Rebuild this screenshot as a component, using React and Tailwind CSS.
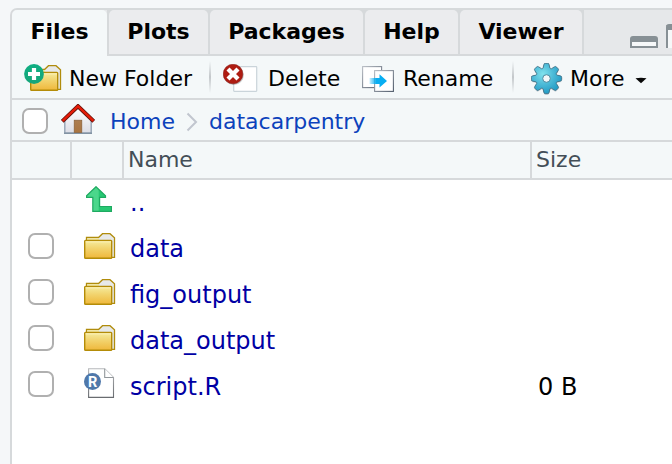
import React from "react";

const Check = ({ className = "" }) => (
  <span className={"block h-[26px] w-[26px] shrink-0 rounded-[7px] border-2 border-[#b0b0b0] bg-white " + className} />
);

const FolderShape = () => (
  <g>
    <path d="M2.5 8V4.5H14.5L18.5.7H26L30.5 4.8V24.3H27.5" fill="#e7e9e9" stroke="#b08c0c" strokeWidth="1.3" />
    <path d="M3.2 7V5.2H15V7Z" fill="#f4eaa4" />
    <rect x=".7" y="7.5" width="27" height="17.8" rx=".8" fill="url(#folder)" stroke="#b48c08" strokeWidth="1.4" />
    <path d="M1.6 8.8H27" stroke="#fff6bd" strokeWidth="1" />
  </g>
);

const Folder = () => (
  <svg width="32" height="27" viewBox="0 0 32 27" className="shrink-0"><FolderShape /></svg>
);

const NewFolder = () => (
  <svg width="38" height="30" viewBox="0 0 38 30" className="shrink-0">
    <g transform="translate(6 1)"><FolderShape /></g>
    <circle cx="10" cy="10" r="9.9" fill="url(#plus)" />
    <path d="M10 4v12M4 10h12" stroke="#fff" strokeWidth="4.2" />
  </svg>
);

const Delete = () => (
  <svg width="36" height="30" viewBox="0 0 36 30" className="shrink-0">
    <rect x="10.7" y="2.7" width="23" height="24.6" rx=".5" fill="#fff" stroke="#cad4da" strokeWidth="1.2" />
    <circle cx="10.8" cy="11" r="10" fill="#555" opacity=".35" />
    <circle cx="10" cy="10" r="9.8" fill="#ae1c12" stroke="#8f1d18" strokeWidth=".6" />
    <path d="M5 5L15 15M15 5L5 15" stroke="#fff" strokeWidth="4.3" />
  </svg>
);

const Rename = () => (
  <svg width="33" height="27" viewBox="0 0 33 27" className="shrink-0">
    <rect x=".6" y=".6" width="19" height="21" fill="#fff" stroke="url(#sheet)" strokeWidth="1.1" />
    <rect x="12.6" y="4.6" width="18.8" height="20.8" fill="#fff" stroke="url(#sheet)" strokeWidth="1.1" />
    <path d="M7.5 12H17.5V8.2L25 15L17.5 21.5V18H7.5Z" fill="url(#arrow)" />
  </svg>
);

const gearPath = Array.from({ length: 8 }, (_, i) => {
  const p = (r, d) => {
    const a = ((i * 45 + d - 90) * Math.PI) / 180;
    return (15.5 + r * Math.cos(a)).toFixed(2) + " " + (15.5 + r * Math.sin(a)).toFixed(2);
  };
  return (i ? "L" : "M") + p(11, -18) + "L" + p(14, -11) + "Q" + p(15.6, -9) + " " + p(15.2, -3) + "L" + p(15.2, 3) + "Q" + p(15.6, 9) + " " + p(14, 11) + "L" + p(11, 18) + "Q" + p(10.4, 22.5) + " " + p(11, 27);
}).join("") + "Z";

const Gear = () => (
  <svg width="32" height="34" viewBox="0 0 32 34" className="shrink-0">
    <path d={gearPath} transform="translate(0 1.2)" fill="#9aa4a8" opacity=".35" />
    <path d={gearPath} fill="url(#gear)" stroke="#426f85" strokeWidth=".9" />
    <circle cx="15.5" cy="15.5" r="3.8" fill="#f2f7f9" stroke="#4c8ba0" strokeWidth="1" />
  </svg>
);

const House = () => (
  <svg width="34" height="31" viewBox="0 0 34 31" className="shrink-0">
    <path d="M3.8 15L17 3L30.2 15V29.2H3.8Z" fill="url(#wall)" stroke="#94a3b4" strokeWidth="1.4" />
    <path d="M3 29.2H31" stroke="#8293a3" strokeWidth="1.5" />
    <rect x="13.2" y="16.2" width="7.6" height="12.3" fill="url(#door)" stroke="#896038" strokeWidth=".7" />
    <path d="M1.3 17.3L17 2.2L32.7 17.3" fill="none" stroke="#61130b" strokeWidth="4" />
    <path d="M1.6 16.8L17 2.2L32.4 16.8" fill="none" stroke="#e51c08" strokeWidth="2.5" />
  </svg>
);

const UpArrow = () => (
  <svg width="27" height="27" viewBox="0 0 27 27" className="shrink-0">
    <path d="M.6 9.7L10 .7L19.5 9.7V11.4H13.6V20.5H25.4V25.4H6.8V11.4H.6Z" fill="url(#up)" stroke="#1eaa61" strokeWidth="1.2" />
  </svg>
);

const Script = () => (
  <svg width="32" height="31" viewBox="0 0 32 31" className="shrink-0">
    <path d="M4.6.7H20.7L29.5 9.5V29.4H4.6Z" fill="#fff" stroke="url(#page)" strokeWidth="1.1" />
    <path d="M20.7.7V9.5H29.5" fill="#fff" stroke="#92979b" strokeWidth="1.1" />
    <circle cx="8.5" cy="13.5" r="8.5" fill="#4f78aa" />
    <text x="4.1" y="18.7" fill="#fff" fontSize="14.5" fontWeight="bold" fontFamily="Roboto, sans-serif">R</text>
  </svg>
);

const Defs = () => (
  <svg width="0" height="0" className="absolute">
    <defs>
      <linearGradient id="folder" x2="0" y2="1"><stop stopColor="#f5eca0" /><stop offset=".45" stopColor="#f2d36d" /><stop offset="1" stopColor="#efb73a" /></linearGradient>
      <linearGradient id="plus" x2="0" y2="1"><stop stopColor="#0faf83" /><stop offset="1" stopColor="#16a579" /></linearGradient>
      <linearGradient id="sheet" x2="1" y2="1"><stop stopColor="#b8bdc4" /><stop offset="1" stopColor="#4e5969" /></linearGradient>
      <linearGradient id="page" x2="0" y2="1"><stop stopColor="#b6b8bb" /><stop offset="1" stopColor="#696c70" /></linearGradient>
      <linearGradient id="arrow"><stop stopColor="#08aef2" stopOpacity=".2" /><stop offset=".4" stopColor="#08aef2" /></linearGradient>
      <radialGradient id="gear" cx=".38" cy=".35" r=".65"><stop stopColor="#80e2ed" /><stop offset=".5" stopColor="#4fbcd8" /><stop offset="1" stopColor="#259dc6" /></radialGradient>
      <linearGradient id="wall" x2="0" y2="1"><stop stopColor="#fff" /><stop offset="1" stopColor="#dcdde5" /></linearGradient>
      <linearGradient id="door" x2="0" y2="1"><stop stopColor="#ac7d50" /><stop offset="1" stopColor="#aa7541" /></linearGradient>
      <linearGradient id="up"><stop stopColor="#4bd78b" /><stop offset=".47" stopColor="#4bd78b" /><stop offset=".5" stopColor="#27c873" /><stop offset="1" stopColor="#27c873" /></linearGradient>
    </defs>
  </svg>
);

const Separator = () => (
  <span className="h-8 w-[2px] shrink-0 bg-linear-to-b from-transparent via-[#c3c7ca] to-transparent" />
);

const tabs = [
  ["Plots", "w-[101px]"],
  ["Packages", "w-[155px]"],
  ["Help", "w-[95px]"],
  ["Viewer", "w-[124px]"],
];

const files = [
  ["data", "", Folder],
  ["fig_output", "", Folder],
  ["data_output", "", Folder],
  ["script.R", "0 B", Script],
];

export default function App() {
  return (
    <div className="h-[464px] w-[672px] overflow-hidden bg-[#f5f7f9] pt-2 pl-[10px] font-['DejaVu_Sans',sans-serif] text-[22px] leading-[26px] whitespace-nowrap text-black">
      <Defs />
      <div className="h-full w-[662px] overflow-hidden rounded-tl-[7px] border-t-2 border-l-2 border-[#d6d9db] bg-white">
        <div className="flex h-[46px] bg-[#e6e8ea] font-bold">
          <div className="flex w-[95px] shrink-0 justify-center rounded-t-[5px] bg-[#f4f8f9] pt-[9px]">Files</div>
          <div className="flex flex-1 border-b-2 border-[#d6d9db]">
            {tabs.map(([name, width]) => (
              <div key={name} className={"shrink-0 bg-[#d6d9db] pl-[2px] " + width}>
                <div className="flex h-full justify-center rounded-t-[5px] bg-[#ebecee] pt-[9px]">{name}</div>
              </div>
            ))}
            <div className="flex flex-1 items-end justify-end border-l-2 border-[#d6d9db] pb-[6px]">
              <div className="mr-2 h-3 w-7 shrink-0 rounded-t-[3px] border-2 border-t-[6px] border-[#879095] bg-[#f6f8f9]" />
              <div className="h-6 w-[6px] shrink-0 rounded-tl-[3px] border-t-[6px] border-l-2 border-[#879095] bg-[#f6f8f9]" />
            </div>
          </div>
        </div>

        <div className="flex h-[44px] items-center border-b-2 border-[#d6d9db] bg-[#f4f8f9] pt-[4px] pl-3">
          <NewFolder />
          <span className="ml-[7px] w-[123px] shrink-0">New Folder</span>
          <span className="ml-[17px] flex pb-1"><Separator /></span>
          <span className="ml-[12px] flex"><Delete /></span>
          <span className="ml-[9px] w-[73px] shrink-0">Delete</span>
          <span className="ml-[21px] flex pt-[1px]"><Rename /></span>
          <span className="ml-[8px] w-[91px] shrink-0">Rename</span>
          <span className="ml-[18px] flex pb-1"><Separator /></span>
          <span className="ml-[17px] flex pt-[1px]"><Gear /></span>
          <span className="ml-[7px] w-[55px] shrink-0">More</span>
          <svg width="12" height="7" viewBox="0 0 12 7" className="mt-[3px] ml-[10px] shrink-0"><path d="M.5 1.3Q6 .4 11.5 1.3L6 6.2Z" fill="#080808" /></svg>
        </div>

        <div className="flex h-[42px] items-center border-b-2 border-[#d6d9db] bg-[#f4f8f9] pl-[10px] text-[#0c42bc]">
          <Check className="mt-[2px]" />
          <span className="ml-[13px] flex pb-[1px]"><House /></span>
          <span className="ml-[15px] w-[65px] shrink-0 pt-[4px]">Home</span>
          <svg width="13" height="20" viewBox="0 0 13 20" className="mt-[4px] ml-[11px] shrink-0"><path d="M1.5 1.5L10 10L1.5 18.5" fill="none" stroke="#c1c6cf" strokeWidth="2" /></svg>
          <span className="ml-[10px] pt-[4px]">datacarpentry</span>
        </div>

        <div className="flex h-[38px] border-b-2 border-[#d6d9db] bg-[#f4f8f9] text-[#434e57]">
          <div className="w-[60px] shrink-0 border-r-2 border-[#d6d9db]" />
          <div className="w-[52px] shrink-0 border-r-2 border-[#d6d9db]" />
          <div className="w-[408px] shrink-0 border-r-2 border-[#d6d9db] pt-[5px] pl-[4px]">Name</div>
          <div className="pt-[5px] pl-[4px]">Size</div>
        </div>

        <div className="text-[24px] leading-[28px] text-[#0000a4]">
          <div className="flex h-[43px] items-start pl-[74px]">
            <span className="flex w-[44px] shrink-0 pt-[6px]"><UpArrow /></span>
            <span className="pt-[9px]">..</span>
          </div>
          {files.map(([name, size, Icon]) => (
            <div key={name} className="flex h-[46px] items-start">
              <Check className="mt-[10px] ml-4" />
              <span className={"ml-[30px] flex w-[46px] shrink-0 " + (size ? "pt-[7px]" : "pt-[10px]")}><Icon /></span>
              <span className="w-[408px] shrink-0 pt-[12px]">{name}</span>
              <span className="pt-[12px] text-black">{size}</span>
            </div>
          ))}
        </div>
      </div>
    </div>
  );
}
